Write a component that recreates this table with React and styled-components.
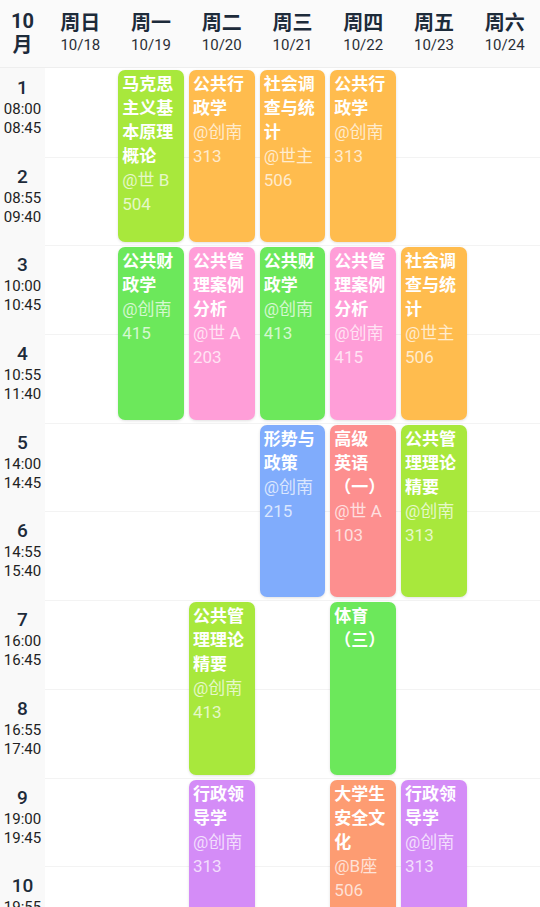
import React from 'react';
import styled, { createGlobalStyle } from 'styled-components';

const GlobalStyle = createGlobalStyle`
  html, body {
    margin: 0;
    padding: 0;
    height: 907px;
    overflow: hidden;
    background: #ffffff;
    font-family: Roboto, "Noto Sans CJK SC", sans-serif;
  }
`;

const ROW_H = 88.7;

const days = [
  { name: '周日', date: '10/18' },
  { name: '周一', date: '10/19' },
  { name: '周二', date: '10/20' },
  { name: '周三', date: '10/21' },
  { name: '周四', date: '10/22' },
  { name: '周五', date: '10/23' },
  { name: '周六', date: '10/24' },
];

const slots = [
  ['08:00', '08:45'],
  ['08:55', '09:40'],
  ['10:00', '10:45'],
  ['10:55', '11:40'],
  ['14:00', '14:45'],
  ['14:55', '15:40'],
  ['16:00', '16:45'],
  ['16:55', '17:40'],
  ['19:00', '19:45'],
  ['19:55', '20:40'],
  ['20:50', '21:35'],
];

const colors = {
  lime: '#a8e83c',
  orange: '#ffbc4e',
  green: '#6ce85b',
  pink: '#ff9ed8',
  blue: '#80acfc',
  red: '#fd8f8f',
  purple: '#d48cf7',
  coral: '#fd9c72',
};

const courses = [
  { day: 1, start: 1, title: '马克思主义基本原理概论', room: '@世 B\n504', color: 'lime' },
  { day: 1, start: 3, title: '公共财政学', room: '@创南415', color: 'green' },
  { day: 2, start: 1, title: '公共行政学', room: '@创南313', color: 'orange' },
  { day: 2, start: 3, title: '公共管理案例分析', room: '@世 A\n203', color: 'pink' },
  { day: 2, start: 7, title: '公共管理理论精要', room: '@创南413', color: 'lime' },
  { day: 2, start: 9, title: '行政领导学', room: '@创南313', color: 'purple' },
  { day: 3, start: 1, title: '社会调查与统计', room: '@世主506', color: 'orange' },
  { day: 3, start: 3, title: '公共财政学', room: '@创南413', color: 'green' },
  { day: 3, start: 5, title: '形势与政策', room: '@创南215', color: 'blue' },
  { day: 4, start: 1, title: '公共行政学', room: '@创南313', color: 'orange' },
  { day: 4, start: 3, title: '公共管理案例分析', room: '@创南415', color: 'pink' },
  { day: 4, start: 5, title: '高级\n英语\n（一）', room: '@世 A\n103', color: 'red' },
  { day: 4, start: 7, title: '体育\n（三）', room: '', color: 'green' },
  { day: 4, start: 9, title: '大学生安全文化', room: '@B座506', color: 'coral' },
  { day: 5, start: 3, title: '社会调查与统计', room: '@世主506', color: 'orange' },
  { day: 5, start: 5, title: '公共管理理论精要', room: '@创南313', color: 'lime' },
  { day: 5, start: 9, title: '行政领导学', room: '@创南313', color: 'purple' },
];

const Page = styled.div`
  width: 540px;
  height: 907px;
  overflow: hidden;
  background: #ffffff;
`;

const Header = styled.div`
  display: grid;
  grid-template-columns: 45px repeat(7, 1fr);
  height: 68px;
  background: #fafafa;
  border-bottom: 1px solid #eeeeee;
  box-sizing: border-box;
`;

const MonthCell = styled.div`
  display: flex;
  flex-direction: column;
  align-items: center;
  justify-content: center;
  padding-bottom: 2px;
  font-size: 20px;
  font-weight: 700;
  line-height: 24px;
  color: #1d2b3a;
`;

const DayCell = styled.div`
  display: flex;
  flex-direction: column;
  align-items: center;
  justify-content: center;
  padding-bottom: 2px;
`;

const DayName = styled.div`
  font-size: 20px;
  font-weight: 700;
  line-height: 24px;
  color: #1d2b3a;
`;

const DayDate = styled.div`
  font-size: 15px;
  line-height: 20px;
  color: #2a2f36;
`;

const Body = styled.div`
  display: grid;
  grid-template-columns: 45px repeat(7, 1fr);
  grid-auto-rows: ${ROW_H}px;
`;

const TimeCell = styled.div`
  grid-column: 1;
  grid-row: ${p => p.$row};
  display: flex;
  flex-direction: column;
  align-items: center;
  padding-top: 8px;
  background: #f9f9f9;
  color: #1d2b3a;
`;

const SlotNo = styled.div`
  font-size: 19px;
  font-weight: 500;
  line-height: 23px;
  margin-bottom: 1px;
`;

const SlotTime = styled.div`
  font-size: 15px;
  line-height: 19px;
  color: #222;
`;

const RowLine = styled.div`
  grid-column: 2 / -1;
  grid-row: ${p => p.$row};
  border-top: ${p => (p.$first ? 'none' : '1px solid #f3f3f3')};
`;

const Card = styled.div`
  grid-column: ${p => p.$day + 2};
  grid-row: ${p => p.$start} / span 2;
  margin: 2px 2.5px 3px;
  padding: 2px 4px 0;
  border-radius: 7px;
  background: ${p => colors[p.$color]};
  box-shadow: 0 1px 3px rgba(0, 0, 0, 0.12);
  overflow: hidden;
  z-index: 1;
`;

const Title = styled.div`
  font-size: 17px;
  font-weight: 700;
  line-height: 24px;
  color: #ffffff;
  white-space: pre-line;
`;

const Room = styled.div`
  font-size: 17px;
  line-height: 24px;
  color: rgba(255, 255, 255, 0.72);
  white-space: pre-line;
`;

export default function App() {
  return (
    <Page>
      <GlobalStyle />
      <Header>
        <MonthCell>
          <span>10</span>
          <span>月</span>
        </MonthCell>
        {days.map(d => (
          <DayCell key={d.name}>
            <DayName>{d.name}</DayName>
            <DayDate>{d.date}</DayDate>
          </DayCell>
        ))}
      </Header>
      <Body>
        {slots.map((s, i) => (
          <React.Fragment key={i}>
            <TimeCell $row={i + 1}>
              <SlotNo>{i + 1}</SlotNo>
              <SlotTime>{s[0]}</SlotTime>
              <SlotTime>{s[1]}</SlotTime>
            </TimeCell>
            <RowLine $row={i + 1} $first={i === 0} />
          </React.Fragment>
        ))}
        {courses.map((c, i) => (
          <Card key={i} $day={c.day} $start={c.start} $color={c.color}>
            <Title>{c.title}</Title>
            {c.room && <Room>{c.room}</Room>}
          </Card>
        ))}
      </Body>
    </Page>
  );
}
